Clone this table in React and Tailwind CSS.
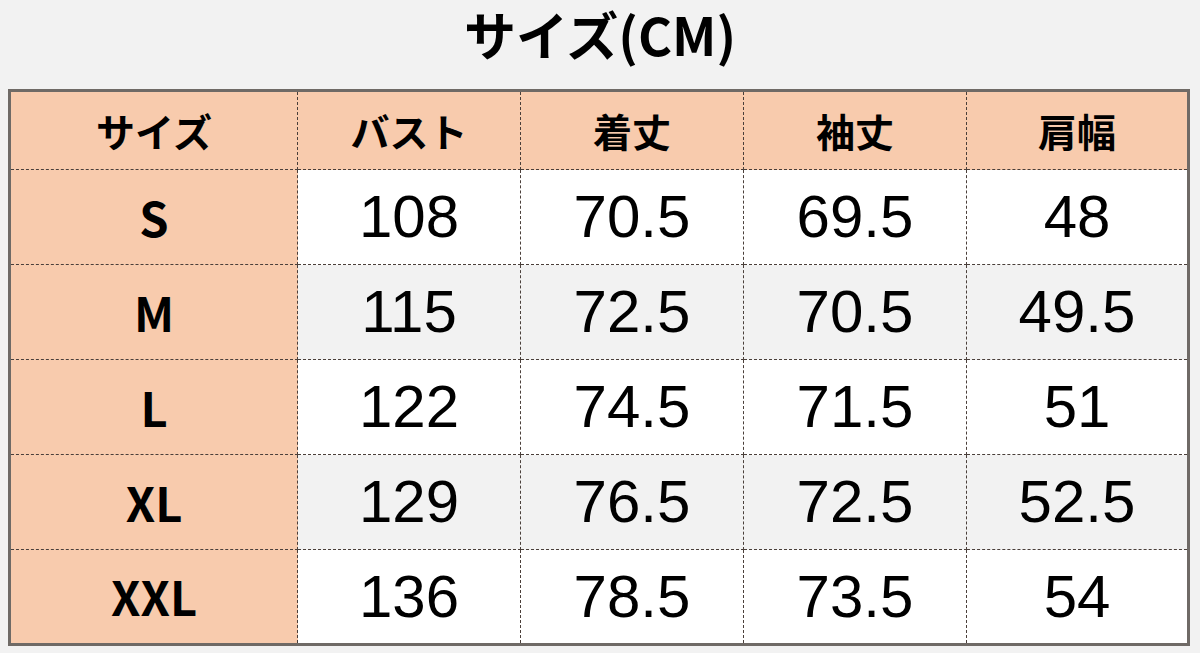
import React from 'react';

const headers = ['サイズ', 'バスト', '着丈', '袖丈', '肩幅'];

const rows = [
  { size: 'S', values: ['108', '70.5', '69.5', '48'] },
  { size: 'M', values: ['115', '72.5', '70.5', '49.5'] },
  { size: 'L', values: ['122', '74.5', '71.5', '51'] },
  { size: 'XL', values: ['129', '76.5', '72.5', '52.5'] },
  { size: 'XXL', values: ['136', '78.5', '73.5', '54'] },
];

const jp = { fontFamily: '"Noto Sans CJK JP", "Noto Sans", sans-serif' };
const num = { fontFamily: '"Liberation Sans", Arial, sans-serif' };

const SizeChart = () => {
  return (
    <div className="w-[1200px] h-[653px] bg-[#f2f2f2] overflow-hidden">
      <h1 className="text-center text-[52px] leading-[68px] font-bold text-black" style={jp}>
        サイズ(CM)
      </h1>
      <div className="px-[8px] pt-[21px]">
        <table className="w-[1182px] table-fixed border-collapse border-[3px] border-solid border-[#6f6a66]">
          <colgroup>
            <col className="w-[288px]" />
            <col className="w-[223px]" />
            <col className="w-[223px]" />
            <col className="w-[223px]" />
            <col />
          </colgroup>
          <thead>
            <tr className="h-[79px] bg-[#f8cbad]">
              {headers.map((h) => (
                <th
                  key={h}
                  className="border border-dashed border-[#4a3f3a] text-center text-[39px] font-bold text-black"
                  style={jp}
                >
                  {h}
                </th>
              ))}
            </tr>
          </thead>
          <tbody>
            {rows.map((row, i) => (
              <tr key={row.size} className={i % 2 === 1 ? 'h-[95px] bg-[#f2f2f2]' : 'h-[95px] bg-white'}>
                <td
                  className="border border-dashed border-[#4a3f3a] bg-[#f8cbad] text-center text-[47px] font-bold text-black"
                  style={jp}
                >
                  {row.size}
                </td>
                {row.values.map((v, j) => (
                  <td
                    key={j}
                    className="border border-dashed border-[#4a3f3a] text-center text-[60px] text-black"
                    style={num}
                  >
                    {v}
                  </td>
                ))}
              </tr>
            ))}
          </tbody>
        </table>
      </div>
    </div>
  );
};

export default function App() {
  return <SizeChart />;
}
